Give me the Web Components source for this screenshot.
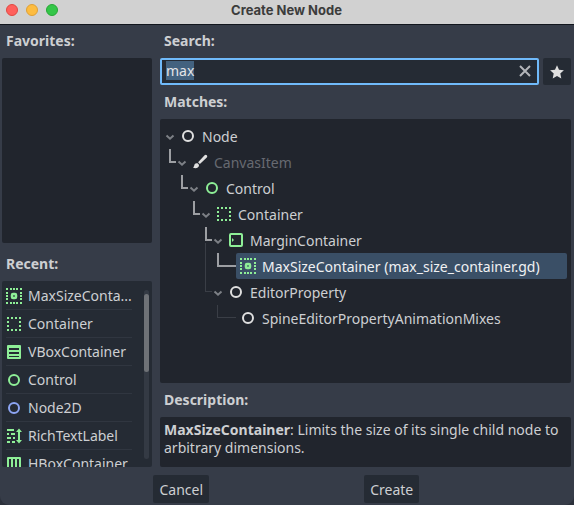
<!DOCTYPE html>
<html lang="en">
<head>
<meta charset="utf-8">
<title>Create New Node</title>
<style>
  html, body { height: 100%; }
  body {
    margin: 0;
    background: #2c313b;
    color: #cdcfd2;
    font: 14px/19px "Noto Sans", "Open Sans", sans-serif;
  }
</style>
</head>
<body>
<create-node-dialog></create-node-dialog>
<script>
const green = '#8eef97', white = '#e0e0e0', blue = '#8da5f3';
const ring = c => `<circle cx="8" cy="8" r="5" fill="none" stroke="${c}" stroke-width="2"/>`;
const ICONS = {
  node: ring(white),
  control: ring(green),
  node2d: ring(blue),
  canvas: `<path d="M14.8 1.2a1.6 1.6 0 0 0-2.2 0L6.1 8.2l1.8 1.8 6.9-6.6a1.6 1.6 0 0 0 0-2.2zM5.2 9.2c-1.600-.3-2.700.6-2.900 2-.1.900-.5 1.700-1.300 2.300 2.200 1.300 5.500.900 6-2 .1-1-.7-2-1.800-2.300z" fill="${white}"/>`,
  container: `<path fill="${green}" d="M1 1h2v2H1zM5 1h2v2H5zM9 1h2v2H9zM13 1h2v2h-2zM1 5h2v2H1zM1 9h2v2H1zM1 13h2v2H1zM5 13h2v2H5zM9 13h2v2H9zM13 13h2v2h-2zM13 5h2v2h-2zM13 9h2v2h-2z"/>`,
  maxsize: `<path fill="${green}" d="M0 0h2v2H0zM4 0h2v2H4zM7 0h2v2H7zM10 0h2v2h-2zM14 0h2v2h-2zM0 4h2v2H0zM0 7h2v2H0zM0 10h2v2H0zM0 14h2v2H0zM4 14h2v2H4zM7 14h2v2H7zM10 14h2v2h-2zM14 14h2v2h-2zM14 4h2v2h-2zM14 7h2v2h-2zM14 10h2v2h-2z"/><rect x="6" y="6" width="4" height="4" rx="1" fill="none" stroke="${green}" stroke-width="2.500"/>`,
  margin: `<rect x="2" y="2" width="12" height="12" rx="1" fill="none" stroke="${green}" stroke-width="2"/><path d="M4 6l2 2-2 2z" fill="${green}"/>`,
  vbox: `<path fill="${green}" fill-rule="evenodd" d="M2 1h12a1 1 0 0 1 1 1v12a1 1 0 0 1-1 1H2a1 1 0 0 1-1-1V2a1 1 0 0 1 1-1zM3 4v2h10V4zM3 8v2h10V8zM3 12v1h10v-1z"/>`,
  hbox: `<path fill="${green}" fill-rule="evenodd" d="M2 1h12a1 1 0 0 1 1 1v12a1 1 0 0 1-1 1H2a1 1 0 0 1-1-1V2a1 1 0 0 1 1-1zM3 3v10h2V3zM7 3v10h2V3zM11 3v10h2V3z"/>`,
  rich: `<path fill="${green}" d="M1 1h7v2H1zM1 5h2v2H1zM5 5h4v2H5zM1 9h4v2H1zM7 9h2v2H7zM1 13h3v2H1zM6 13h3v2H6zM12 4h-2l3-3.500L16 4h-2v8h2l-3 3.500L10 12h2z"/>`,
  star: `<path fill="${white}" d="M8 1.300l2 4.400 4.900.5-3.600 3.300 1 4.900L8 11.900l-4.300 2.500 1-4.900L1.100 6.200 6 5.700z"/>`,
  close: `<path d="M3 3l10 10M13 3L3 13" fill="none" stroke="#b3b5b9" stroke-width="2"/>`,
  chevron: `<path d="M4.500 6.500L8 9.700l3.500-3.200" fill="none" stroke="#7d8086" stroke-width="2"/>`
};

function define(name, html, setup) {
  const template = document.createElement('template');
  template.innerHTML = html;
  customElements.define(name, class extends HTMLElement {
    constructor() {
      super();
      this.attachShadow({ mode: 'open' }).append(template.content.cloneNode(true));
    }
    connectedCallback() { if (setup) setup(this, this.shadowRoot); }
  });
}

define('node-icon', `
  <style>:host { display: block; flex: none; width: 16px; height: 16px; } svg { display: block; }</style>
  <svg width="16" height="16" viewBox="0 0 16 16" aria-hidden="true"></svg>`,
  (el, root) => { root.querySelector('svg').innerHTML = ICONS[el.getAttribute('name')]; });

define('title-bar', `
  <style>
    :host { display: grid; grid-template-columns: 1fr auto 1fr; align-items: center; height: 24px; padding: 0 7px 0 6px;
      background: #d1d1d1; border-bottom: 1px solid #12161d; color: #3c3c3c; }
    .lights { display: flex; gap: 8px; padding-bottom: 4px; }
    button { width: 12px; height: 12px; padding: 0; border-radius: 50%; border: 1px solid; }
    .close { background: #ff605c; border-color: #e14942; }
    .min { background: #fdbc40; border-color: #dfa035; }
    .max { background: #34c648; border-color: #27a835; }
    h1 { margin: 0; padding-bottom: 5px; font: 700 13px/16px Inter, sans-serif; }
  </style>
  <div class="lights">
    <button class="close" aria-label="Close"></button><button class="min" aria-label="Minimize"></button><button class="max" aria-label="Zoom"></button>
  </div>
  <h1><slot></slot></h1>`);

define('recent-item', `
  <style>
    :host { display: flex; align-items: center; gap: 6px; height: 27px; border-bottom: 1px solid #303640; flex: none; }
    span { white-space: nowrap; }
  </style>
  <node-icon></node-icon><span><slot></slot></span>`,
  (el, root) => {
    el.setAttribute('role', 'option');
    root.querySelector('node-icon').replaceWith(Object.assign(document.createElement('template'),
      { innerHTML: `<node-icon name="${el.getAttribute('icon')}"></node-icon>` }).content);
  });

/* guides: one letter per indent level
   (space) empty, | sibling line, L active elbow, T active elbow above a sibling line, l plain elbow */
define('tree-row', `
  <style>
    :host { display: flex; height: 26px; }
    .guide { flex: none; box-sizing: border-box; width: 12px; padding: 0 1px 0 4px; }
    .guide.leaf { width: 23px; padding-right: 0; }
    .guide i { display: block; box-sizing: border-box; height: 13px; }
    .bar i { height: 26px; border-left: 1px solid #3a3e46; }
    .on i { height: 14px; border: solid #9d9fa3; border-width: 0 0 2px 2px; }
    .off i { border: solid #3a3e46; border-width: 0 0 1px 1px; }
    .tee::after { content: ""; display: block; height: 10px; margin-top: 2px; border-left: 1px solid #3a3e46; }
    .fold { flex: none; width: 11px; padding: 2px 1px 0 0; border: 0; background: none; display: grid; place-content: center; }
    .item { flex: 1; display: flex; align-items: center; gap: 6px; padding-left: 4px; border-radius: 2px; min-width: 0; white-space: nowrap; }
    :host([selected]) .item { background: #3a4f66; color: #f0f1f3; }
    :host([disabled]) .item { color: #676a71; }
  </style>`,
  (el, root) => {
    el.setAttribute('role', 'treeitem');
    if (el.hasAttribute('selected')) el.setAttribute('aria-selected', 'true');
    const leaf = el.hasAttribute('leaf');
    const kinds = { ' ': '', '|': 'bar', 'L': 'on', 'T': 'on tee', 'l': 'off' };
    const guides = [...(el.getAttribute('guides') || '')];
    const html = guides.map((g, i) =>
      `<div class="guide ${kinds[g]} ${leaf && i === guides.length - 1 ? 'leaf' : ''}"><i></i></div>`).join('') +
      (leaf ? '' : '<button class="fold" aria-label="Collapse"><node-icon name="chevron"></node-icon></button>') +
      `<div class="item"><node-icon name="${el.getAttribute('icon')}"></node-icon><span><slot></slot></span></div>`;
    root.append(Object.assign(document.createElement('template'), { innerHTML: html }).content);
  });

define('search-field', `
  <style>
    :host { display: flex; gap: 4px; }
    .box { flex: 1; display: flex; align-items: center; min-width: 0; height: 23px; border: 2px solid #70bafa; border-radius: 2px;
      background: #252b34; padding: 0 4px; }
    input { flex: 1; min-width: 0; height: 19px; margin-bottom: 2px; padding: 0; border: 0; outline: 0; background: none; color: #e3e5e8; font: inherit; line-height: 19px; }
    input::selection { background: rgba(68, 99, 129, .99); color: #e3e5e8; }
    button { padding: 0; border: 0; background: none; display: grid; place-content: center; }
    .box button { margin-bottom: 2px; }
    .fav { width: 28px; border-radius: 2px; background: #252b34; }
  </style>
  <div class="box"><input id="q" type="text" aria-label="Search" value="max"><button aria-label="Clear"><node-icon name="close"></node-icon></button></div>
  <button class="fav" aria-label="Favorite"><node-icon name="star"></node-icon></button>`,
  (el, root) => { const q = root.getElementById('q'); q.focus(); q.select(); });

define('dialog-button', `
  <style>
    :host { display: block; }
    button { height: 28px; padding: 0 6px; border: 0; border-radius: 2px; background: #252b34; color: inherit; font: inherit; }
  </style>
  <button><slot></slot></button>`);

define('create-node-dialog', `
  <style>
    :host { display: flex; flex-direction: column; min-height: 100vh; background: #363c48; border-radius: 0 0 9px 9px; overflow: hidden; }
    main { flex: 1; display: grid; grid-template-columns: minmax(150px, 26%) minmax(0, 1fr); gap: 8px; padding: 0 3px 0 2px; }
    section { display: flex; flex-direction: column; min-width: 0; }
    h2 { margin: 0; padding: 7px 4px 8px; font-size: 14px; line-height: 19px; font-weight: 700; }
    section h2:first-child { padding-top: 6px; }
    .favorites + h2 { padding-top: 11px; }
    .panel { background: #21252d; border-radius: 2px; }
    .favorites, .recent { flex: 1 1 0; min-height: 0; box-sizing: border-box; }
    .recent { display: flex; background: #252b34; overflow: hidden; padding: 1px 3px 0 4px; gap: 12px; }
    .list { flex: 1; min-width: 0; height: 0; }
    .scroll { flex: none; width: 5px; margin: 8px 0; border-radius: 3px; background: #343a44; padding-top: 4px; }
    .scroll i { display: block; height: 78px; border-radius: 3px; background: #6f7277; }
    .tree { flex: 1; padding: 4px 4px 4px 5px; }
    p { margin: 0; padding: 4px 4px 10px; line-height: 18px; }
    footer { display: grid; grid-template-columns: 1fr 1fr; padding: 8px 77px 2px 76px; }
    footer dialog-button { justify-self: center; }
  </style>
  <title-bar>Create New Node</title-bar>
  <main>
    <section>
      <h2>Favorites:</h2>
      <div class="panel favorites" role="listbox" aria-label="Favorites"></div>
      <h2>Recent:</h2>
      <div class="panel recent">
        <div class="list" role="listbox" aria-label="Recent">
          <recent-item icon="maxsize" title="MaxSizeContainer">MaxSizeConta...</recent-item>
          <recent-item icon="container">Container</recent-item>
          <recent-item icon="vbox">VBoxContainer</recent-item>
          <recent-item icon="control">Control</recent-item>
          <recent-item icon="node2d">Node2D</recent-item>
          <recent-item icon="rich">RichTextLabel</recent-item>
          <recent-item icon="hbox">HBoxContainer</recent-item>
        </div>
        <div class="scroll"><i></i></div>
      </div>
    </section>
    <section>
      <h2>Search:</h2>
      <search-field></search-field>
      <h2>Matches:</h2>
      <div class="panel tree" role="tree" aria-label="Matches">
        <tree-row icon="node">Node</tree-row>
        <tree-row guides="L" icon="canvas" disabled>CanvasItem</tree-row>
        <tree-row guides=" L" icon="control">Control</tree-row>
        <tree-row guides="  L" icon="container">Container</tree-row>
        <tree-row guides="   T" icon="margin">MarginContainer</tree-row>
        <tree-row guides="   |L" icon="maxsize" leaf selected>MaxSizeContainer (max_size_container.gd)</tree-row>
        <tree-row guides="   l" icon="node">EditorProperty</tree-row>
        <tree-row guides="    l" icon="node" leaf>SpineEditorPropertyAnimationMixes</tree-row>
      </div>
      <h2>Description:</h2>
      <div class="panel"><p><b>MaxSizeContainer</b>: Limits the size of its single child node to arbitrary dimensions.</p></div>
    </section>
  </main>
  <footer><dialog-button>Cancel</dialog-button><dialog-button>Create</dialog-button></footer>`);
</script>
</body>
</html>
